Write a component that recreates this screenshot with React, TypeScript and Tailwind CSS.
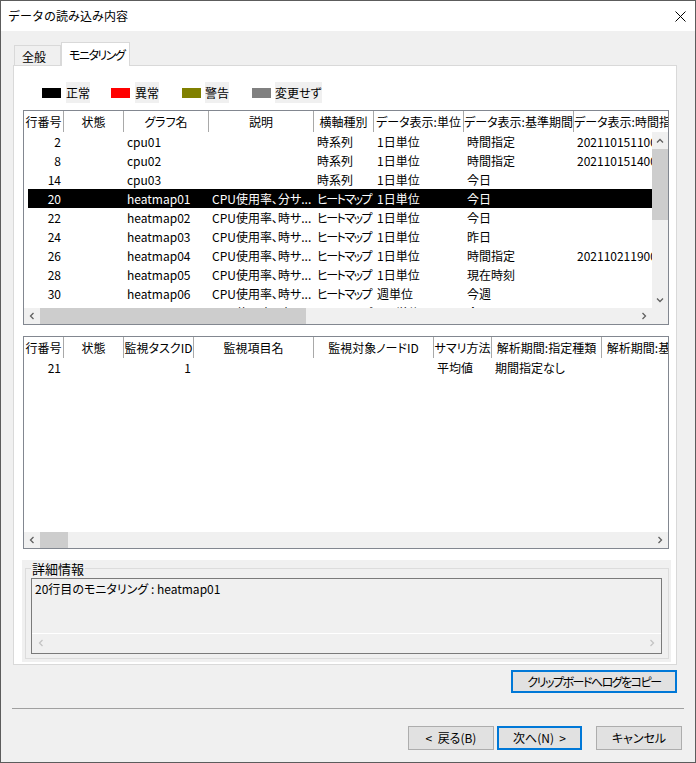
import React from "react";

const palt = "[font-feature-settings:'palt']";

function Chev({ d, c = "#606060" }: { d: "u" | "d" | "l" | "r"; c?: string }) {
  const p =
    d === "u"
      ? "1,5.5 4,2.5 7,5.5"
      : d === "d"
      ? "1,2.5 4,5.5 7,2.5"
      : d === "l"
      ? "5.5,1 2.5,4 5.5,7"
      : "2.5,1 5.5,4 2.5,7";
  return (
    <svg width="8" height="8" viewBox="0 0 8 8">
      <polyline points={p} fill="none" stroke={c} strokeWidth="1.3" />
    </svg>
  );
}

type Align = "l" | "r";

function Header({ heads, cls }: { heads: string[]; cls: string[] }) {
  return (
    <div className="flex h-[21px] shrink-0 overflow-hidden bg-white">
      {heads.map((h, i) => (
        <div
          key={i}
          className={`${cls[i]} shrink-0 flex items-center justify-center border-r border-[#a9a9a9] overflow-hidden whitespace-nowrap`}
        >
          {h}
        </div>
      ))}
    </div>
  );
}

function Row({ cells, cls, aligns, sel }: { cells: string[]; cls: string[]; aligns: Align[]; sel?: boolean }) {
  return (
    <div className={`ml-[4px] flex h-[19px] ${sel ? "bg-black text-white" : ""}`}>
      {cells.map((c, i) => (
        <div
          key={i}
          className={`${cls[i]} shrink-0 overflow-hidden whitespace-nowrap leading-[19px] ${
            aligns[i] === "r" ? "text-right pr-[3px]" : "pl-[3px]"
          } ${c === "ヒートマップ" ? "tracking-[-1.5px]" : ""}`}
        >
          {c}
        </div>
      ))}
    </div>
  );
}

const h1 = ["行番号", "状態", "グラフ名", "説明", "横軸種別", "データ表示:単位", "データ表示:基準期間", "データ表示:時間指定"];
const h1cls = ["w-[40px]", "w-[60px]", "w-[85px]", "w-[105px]", "w-[60px]", "w-[90px]", "w-[110px]", "w-[110px]"];
const r1cls = ["w-[36px]", "w-[60px]", "w-[85px]", "w-[105px]", "w-[60px]", "w-[90px]", "w-[110px]", "w-[110px]"];
const a1: Align[] = ["r", "l", "l", "l", "l", "l", "l", "l"];
const rows1: string[][] = [
  ["2", "", "cpu01", "", "時系列", "1日単位", "時間指定", "20211015110000"],
  ["8", "", "cpu02", "", "時系列", "1日単位", "時間指定", "20211015140000"],
  ["14", "", "cpu03", "", "時系列", "1日単位", "今日", ""],
  ["20", "", "heatmap01", "CPU使用率、分サ...", "ヒートマップ", "1日単位", "今日", ""],
  ["22", "", "heatmap02", "CPU使用率、時サ...", "ヒートマップ", "1日単位", "今日", ""],
  ["24", "", "heatmap03", "CPU使用率、時サ...", "ヒートマップ", "1日単位", "昨日", ""],
  ["26", "", "heatmap04", "CPU使用率、時サ...", "ヒートマップ", "1日単位", "時間指定", "20211021190000"],
  ["28", "", "heatmap05", "CPU使用率、時サ...", "ヒートマップ", "1日単位", "現在時刻", ""],
  ["30", "", "heatmap06", "CPU使用率、時サ...", "ヒートマップ", "週単位", "今週", ""],
  ["32", "", "heatmap07", "CPU使用率、時サ...", "ヒートマップ", "1日単位", "今日", ""],
];

const h2 = ["行番号", "状態", "監視タスクID", "監視項目名", "監視対象ノードID", "サマリ方法", "解析期間:指定種類", "解析期間:基準期間"];
const h2cls = ["w-[40px]", "w-[60px]", "w-[70px]", "w-[120px]", "w-[120px]", "w-[58px]", "w-[110px]", "w-[110px]"];
const r2cls = ["w-[36px]", "w-[60px]", "w-[70px]", "w-[120px]", "w-[120px]", "w-[58px]", "w-[110px]", "w-[110px]"];
const a2: Align[] = ["r", "l", "r", "l", "l", "l", "l", "l"];
const rows2: string[][] = [["21", "", "1", "", "", "平均値", "期間指定なし", ""]];

function Swatch({ color }: { color: string }) {
  return <div className={`w-[19px] h-[10px] shrink-0 ${color}`} />;
}

function Btn({ children, def, w }: { children: React.ReactNode; def?: boolean; w: string }) {
  return (
    <div
      className={`${w} h-[24px] flex items-center justify-center bg-[#e1e1e1] whitespace-pre ${
        def ? "border-2 border-[#0078d7]" : "border border-[#adadad]"
      }`}
    >
      {children}
    </div>
  );
}

export default function App() {
  return (
    <div className="w-[696px] h-[763px] border border-[#5c5c5c] flex flex-col overflow-hidden font-['Noto_Sans_CJK_JP',sans-serif] text-[12px] text-black bg-white">
      {/* title bar */}
      <div className="h-[30px] shrink-0 bg-white flex items-center pl-[7px]">
        <span>データの読み込み内容</span>
        <svg className="ml-auto mr-[9px]" width="11" height="11" viewBox="0 0 11 11">
          <path d="M0.5 0.5 L10.5 10.5 M10.5 0.5 L0.5 10.5" stroke="#000" strokeWidth="1" />
        </svg>
      </div>

      {/* body */}
      <div className={`flex-1 bg-[#f0f0f0] pl-[12px] pr-[18px] pt-[11px] flex flex-col ${palt}`}>
        {/* tabs */}
        <div className="flex items-end h-[23px] pl-[1px] shrink-0">
          <div className="w-[47px] h-[20px] border border-b-0 border-[#d9d9d9] bg-[#f0f0f0] flex items-center pl-[7px] pt-[2px]">
            全般
          </div>
          <div className="relative z-10 -mb-px w-[69px] h-[24px] border border-b-0 border-[#d9d9d9] bg-white flex items-center pl-[7px] whitespace-nowrap tracking-[-1.5px]">
            モニタリング
          </div>
        </div>

        {/* panel */}
        <div className="h-[600px] shrink-0 border border-[#d9d9d9] bg-white flex flex-col">
          {/* legend */}
          <div className="flex items-center h-[21px] mt-[16px]">
            <div className="ml-[28px]" />
            <Swatch color="bg-black" />
            <span className="ml-[5px] bg-[#f0f0f0] h-[21px] leading-[21px]">正常</span>
            <div className="ml-[21px]" />
            <Swatch color="bg-[#ff0000]" />
            <span className="ml-[5px] bg-[#f0f0f0] h-[21px] leading-[21px]">異常</span>
            <div className="ml-[23px]" />
            <Swatch color="bg-[#808000]" />
            <span className="ml-[4px] bg-[#f0f0f0] h-[21px] leading-[21px]">警告</span>
            <div className="ml-[23px]" />
            <Swatch color="bg-[#808080]" />
            <span className="ml-[4px] bg-[#f0f0f0] h-[21px] leading-[21px]">変更せず</span>
          </div>

          {/* table 1 */}
          <div className="ml-[9px] mt-[7px] w-[646px] h-[215px] border border-[#828790] flex flex-col bg-white">
            <Header heads={h1} cls={h1cls} />
            <div className="flex h-[176px]">
              <div className="flex-1 overflow-hidden">
                {rows1.map((r, i) => (
                  <Row key={i} cells={r} cls={r1cls} aligns={a1} sel={i === 3} />
                ))}
              </div>
              <div className="w-[16px] bg-[#f0f0f0] flex flex-col">
                <div className="h-[17px] flex items-center justify-center">
                  <Chev d="u" />
                </div>
                <div className="h-[71px] bg-[#cdcdcd]" />
                <div className="flex-1" />
                <div className="h-[17px] flex items-center justify-center">
                  <Chev d="d" />
                </div>
              </div>
            </div>
            <div className="flex h-[16px] bg-[#f0f0f0]">
              <div className="w-[16px] flex items-center justify-center">
                <Chev d="l" />
              </div>
              <div className="w-[266px] bg-[#cdcdcd]" />
              <div className="flex-1" />
              <div className="w-[16px] flex items-center justify-center">
                <Chev d="r" />
              </div>
              <div className="w-[16px]" />
            </div>
          </div>

          {/* table 2 */}
          <div className="ml-[9px] mt-[11px] w-[646px] h-[213px] border border-[#828790] flex flex-col bg-white">
            <Header heads={h2} cls={h2cls} />
            <div className="h-[174px] overflow-hidden">
              {rows2.map((r, i) => (
                <Row key={i} cells={r} cls={r2cls} aligns={a2} />
              ))}
            </div>
            <div className="flex h-[16px] bg-[#f0f0f0]">
              <div className="w-[16px] flex items-center justify-center">
                <Chev d="l" />
              </div>
              <div className="w-[28px] bg-[#cdcdcd]" />
              <div className="flex-1" />
              <div className="w-[16px] flex items-center justify-center">
                <Chev d="r" />
              </div>
            </div>
          </div>

          {/* detail group */}
          <div className="ml-[8px] mt-[11px] w-[649px] h-[102px] bg-[#f0f0f0] pt-[8px] pl-[3px] pr-[2px] pb-[3px]">
            <div className="h-full border border-[#dcdcdc] flex flex-col">
              <span className="-mt-[9px] ml-[5px] self-start bg-[#f0f0f0] px-[1px] h-[17px] leading-[17px] text-[13px]">詳細情報</span>
              <div className="ml-[5px] mt-[1px] w-[631px] h-[76px] border border-[#7a7a7a] bg-[#f0f0f0] flex flex-col">
                <div className="h-[54px] pl-[3px] pt-[1px] leading-[18px]">20行目のモニタリング : heatmap01</div>
                <div className="h-[19px] border-t border-white flex items-center justify-between px-[5px]">
                  <Chev d="l" c="#c4c4c4" />
                  <Chev d="r" c="#c4c4c4" />
                </div>
              </div>
            </div>
          </div>
        </div>

        {/* copy button */}
        <div className="self-end mt-[5px] w-[166px] h-[23px] border-2 border-[#0078d7] bg-[#e1e1e1] flex items-center justify-center tracking-[-1.5px] whitespace-nowrap">
          クリップボードへログをコピー
        </div>

        {/* separator */}
        <div className="mt-[15px] -ml-[1px] -mr-[7px] h-px bg-[#a0a0a0]" />

        {/* nav buttons */}
        <div className="mt-[17px] -mr-[5px] flex justify-end">
          <Btn w="w-[86px]">{"<  戻る(B)"}</Btn>
          <div className="w-[3px]" />
          <Btn w="w-[85px]" def>
            {"次へ(N)  >"}
          </Btn>
          <div className="w-[14px]" />
          <Btn w="w-[86px]">キャンセル</Btn>
        </div>
      </div>
    </div>
  );
}
